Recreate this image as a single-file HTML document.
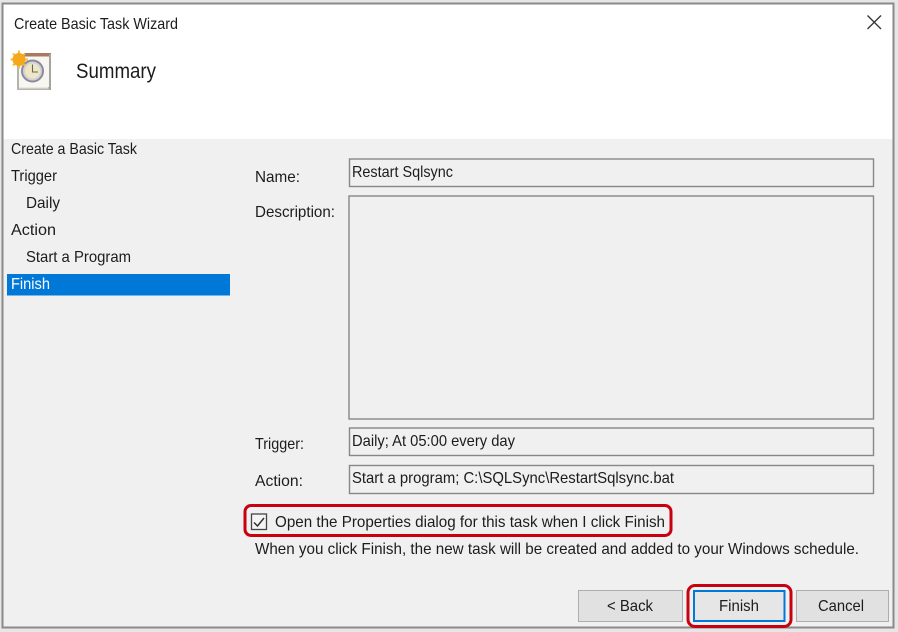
<!DOCTYPE html>
<html><head><meta charset="utf-8"><style>
html,body{margin:0;padding:0;background:#fff;width:898px;height:632px;overflow:hidden}
svg{display:block}
text{font-family:"Liberation Sans",sans-serif;font-size:16px;fill:#1c1c1c;filter:blur(.25px)}
</style></head><body>
<svg width="898" height="632" viewBox="0 0 898 632" xmlns="http://www.w3.org/2000/svg">
<rect width="898" height="632" fill="#e6e6e6"/>
<rect x="2.500" y="3.500" width="891" height="624" fill="#f0f0f0" stroke="#8a8a8a" stroke-width="2"/>
<rect x="3.500" y="4.500" width="889" height="134.500" fill="#fff"/>

<text x="14" y="29" textLength="164" lengthAdjust="spacingAndGlyphs">Create Basic Task Wizard</text>
<path d="M867.500 15.500L881 29M881 15.500L867.500 29" stroke="#333" stroke-width="1.300" fill="none"/>

<!-- icon -->
<rect x="17" y="60" width="33" height="30" fill="#b4b4ac"/>
<rect x="19" y="55" width="31" height="32" fill="#f7f6f0"/>
<rect x="19" y="87" width="29" height="1.500" fill="#e8e8e2"/>
<rect x="24" y="53" width="27" height="3.500" fill="#a87a62"/>
<rect x="49" y="54" width="2" height="36" fill="#a5a59d"/>
<circle cx="32.500" cy="71" r="10.500" fill="#d2d2da" stroke="#8b8b99" stroke-width="2"/>
<circle cx="32.500" cy="71" r="7.500" fill="#efe6c2"/>
<path d="M32.500 64.500V72H38" stroke="#666" stroke-width="1.100" fill="none"/>
<path d="M19 50.500V68.500M10.500 59.500H28M13 53.500L25 65.500M25 53.500L13 65.500" stroke="#f8bb3d" stroke-width="2"/>
<circle cx="19" cy="59.500" r="6.500" fill="#f5a81c"/>

<text x="76" y="78" style="font-size:21px" textLength="80" lengthAdjust="spacingAndGlyphs">Summary</text>

<!-- left nav -->
<text x="11" y="154" textLength="126" lengthAdjust="spacingAndGlyphs">Create a Basic Task</text>
<text x="11" y="181" textLength="46" lengthAdjust="spacingAndGlyphs">Trigger</text>
<text x="26" y="208" textLength="34" lengthAdjust="spacingAndGlyphs">Daily</text>
<text x="11" y="235" textLength="45" lengthAdjust="spacingAndGlyphs">Action</text>
<text x="26" y="262" textLength="105" lengthAdjust="spacingAndGlyphs">Start a Program</text>
<rect x="7" y="274" width="223" height="21.500" fill="#0078d7"/>
<text x="11" y="289" textLength="39" lengthAdjust="spacingAndGlyphs" style="fill:#fff">Finish</text>

<!-- labels -->
<text x="255" y="182" textLength="45" lengthAdjust="spacingAndGlyphs">Name:</text>
<text x="255" y="217" textLength="80" lengthAdjust="spacingAndGlyphs">Description:</text>
<text x="255" y="449" textLength="49" lengthAdjust="spacingAndGlyphs">Trigger:</text>
<text x="255" y="486" textLength="48" lengthAdjust="spacingAndGlyphs">Action:</text>

<!-- fields -->
<g fill="#f0f0f0" stroke="#878787" stroke-width="1.400">
<rect x="349.500" y="159" width="524" height="27.500"/>
<rect x="349" y="196" width="524.500" height="223"/>
<rect x="349.500" y="428" width="524" height="27.500"/>
<rect x="349.500" y="465.500" width="524" height="28"/>
</g>
<text x="352" y="177" textLength="101" lengthAdjust="spacingAndGlyphs">Restart Sqlsync</text>
<text x="352" y="446" textLength="163" lengthAdjust="spacingAndGlyphs">Daily; At 05:00 every day</text>
<text x="352" y="483" textLength="322" lengthAdjust="spacingAndGlyphs">Start a program; C:\SQLSync\RestartSqlsync.bat</text>

<!-- checkbox row -->
<rect x="251.500" y="514" width="15" height="15.500" fill="#f4f4f4" stroke="#444" stroke-width="1.300"/>
<path d="M254 522.500L257.500 526L264 518" stroke="#333" stroke-width="1.500" fill="none"/>
<text x="275" y="527" textLength="390" lengthAdjust="spacingAndGlyphs">Open the Properties dialog for this task when I click Finish</text>
<rect x="245" y="505.500" width="426" height="30" rx="6" fill="none" stroke="#c8000f" stroke-width="3"/>
<text x="255" y="554" textLength="604" lengthAdjust="spacingAndGlyphs">When you click Finish, the new task will be created and added to your Windows schedule.</text>

<!-- buttons -->
<rect x="578.500" y="590.500" width="104" height="31" fill="#e1e1e1" stroke="#adadad"/>
<text x="607" y="611" textLength="46" lengthAdjust="spacingAndGlyphs">&lt; Back</text>
<rect x="694" y="591" width="90.500" height="30" fill="#e6e6e6" stroke="#0078d7" stroke-width="2"/>
<text x="719" y="611" textLength="40" lengthAdjust="spacingAndGlyphs">Finish</text>
<rect x="796.500" y="590.500" width="92" height="31" fill="#e1e1e1" stroke="#adadad"/>
<text x="818" y="611" textLength="46" lengthAdjust="spacingAndGlyphs">Cancel</text>
<rect x="688" y="585.500" width="103" height="41" rx="7" fill="none" stroke="#c8000f" stroke-width="3"/>
</svg>
</body></html>
